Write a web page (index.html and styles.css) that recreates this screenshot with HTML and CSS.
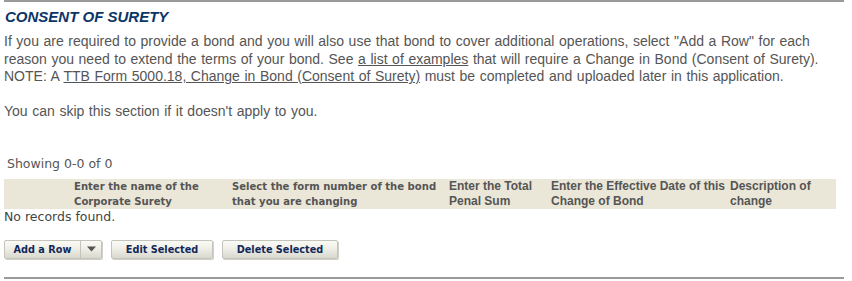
FILE: index.html
```html
<!DOCTYPE html>
<html>
<head>
<meta charset="utf-8">
<link rel="stylesheet" href="styles.css">
</head>
<body>
<div class="section">
  <div class="rule"></div>
  <h2 class="title">CONSENT OF SURETY</h2>
  <p class="intro">If you are required to provide a bond and you will also use that bond to cover additional operations, select "Add a Row" for each reason you need to extend the terms of your bond. See <a href="#" class="link">a list of examples</a> that will require a Change in Bond (Consent of Surety).<br>NOTE: A <a href="#" class="link">TTB Form 5000.18, Change in Bond (Consent of Surety)</a> must be completed and uploaded later in this application.</p>
  <p class="intro skip">You can skip this section if it doesn't apply to you.</p>
  <div class="grid-info">Showing 0-0 of 0</div>
  <div class="grid-head">
    <div class="cell"></div>
    <div class="cell tahoma">Enter the name of the<br>Corporate Surety</div>
    <div class="cell tahoma">Select the form number of the bond<br>that you are changing</div>
    <div class="cell">Enter the Total<br>Penal Sum</div>
    <div class="cell">Enter the Effective Date of this<br>Change of Bond</div>
    <div class="cell">Description of<br>change</div>
  </div>
  <div class="empty">No records found.</div>
  <div class="toolbar">
    <div class="btn split">
      <span class="split-main">Add a Row</span>
      <span class="split-arrow"><svg width="9" height="6" viewBox="0 0 9 6"><path d="M0 0.5 H9 L4.5 5.5 Z" fill="#555"/></svg></span>
    </div>
    <div class="btn edit">Edit Selected</div>
    <div class="btn delete">Delete Selected</div>
  </div>
  <div class="rule bottom"></div>
</div>
</body>
</html>
```
FILE: styles.css
```css
html, body {
  margin: 0;
  padding: 0;
  background: #fff;
}
.section {
  padding: 0 8px 0 4px;
  font-family: "Liberation Sans", Arial, sans-serif;
}
.rule {
  height: 2px;
  background: #9a9a9a;
}
.title {
  margin: 5px 0 0 1px;
  font-size: 15px;
  line-height: 19px;
  font-weight: bold;
  font-style: italic;
  color: #0b3567;
}
.intro {
  margin: 7px 0 0 0;
  max-width: 830px;
  font-size: 14px;
  line-height: 17.5px;
  word-spacing: 0.7px;
  color: #555;
}
.intro.skip {
  margin-top: 17.5px;
}
.link {
  color: #555;
  text-decoration: underline;
}
.grid-info {
  margin: 35px 0 0 3px;
  font-family: "DejaVu Sans", sans-serif;
  font-size: 12.5px;
  line-height: 16px;
  color: #555;
}
.grid-head {
  margin-top: 7px;
  width: 832px;
  height: 30px;
  background: #ebe7d8;
  display: grid;
  grid-template-columns: 70px 158px 217px 102px 179px 106px;
  font-size: 12px;
  line-height: 15px;
  font-weight: bold;
  color: #555;
}
.cell.tahoma {
  font-family: "DejaVu Sans Condensed", "DejaVu Sans", sans-serif;
  font-size: 11.2px;
}
.empty {
  font-family: "DejaVu Sans", sans-serif;
  font-size: 12.5px;
  line-height: 16px;
  color: #444;
}
.toolbar {
  margin-top: 15px;
  display: flex;
  gap: 9px;
}
.btn {
  height: 17px;
  border: 1px solid #c4c4bc;
  border-radius: 2px;
  background: linear-gradient(#fbfbf6, #ecebe3 55%, #d9d8ce);
  box-shadow: 1px 1px 0 #d0d0c8;
  font-family: "DejaVu Sans Condensed", "DejaVu Sans", sans-serif;
  font-weight: bold;
  font-size: 10.8px;
  line-height: 17px;
  color: #12285a;
  text-align: center;
}
.split {
  width: 96px;
  display: flex;
}
.split-main {
  width: 75px;
  border-right: 1px solid #c4c4bc;
}
.split-arrow {
  flex: 1;
  display: flex;
  align-items: center;
  justify-content: center;
}
.edit {
  width: 100px;
}
.delete {
  width: 114px;
}
.rule.bottom {
  margin-top: 18px;
}
```
